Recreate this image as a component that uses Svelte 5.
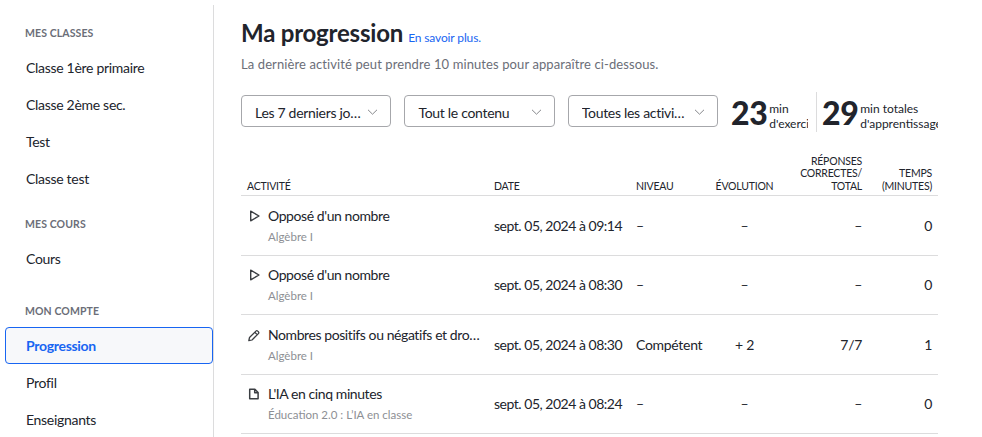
<script>
  const groups = [
    { title: 'MES CLASSES', items: ['Classe 1ère primaire', 'Classe 2ème sec.', 'Test', 'Classe test'] },
    { title: 'MES COURS', items: ['Cours'] },
    { title: 'MON COMPTE', items: ['Progression', 'Profil', 'Enseignants'] }
  ];
  const rows = [
    { icon: 'play', name: "Opposé d'un nombre", sub: 'Algèbre I', date: 'sept. 05, 2024 à 09:14', level: '–', evo: '–', score: '–', time: '0' },
    { icon: 'play', name: "Opposé d'un nombre", sub: 'Algèbre I', date: 'sept. 05, 2024 à 08:30', level: '–', evo: '–', score: '–', time: '0' },
    { icon: 'pencil', name: 'Nombres positifs ou négatifs et droite numérique', sub: 'Algèbre I', date: 'sept. 05, 2024 à 08:30', level: 'Compétent', evo: '+ 2', score: '7/7', time: '1' },
    { icon: 'doc', name: "L'IA en cinq minutes", sub: 'Éducation 2.0 : L’IA en classe', date: 'sept. 05, 2024 à 08:24', level: '–', evo: '–', score: '–', time: '0' }
  ];
  const selects = ['Les 7 derniers jours', 'Tout le contenu', 'Toutes les activités'];
</script>

<div class="page">
  <aside class="sidebar">
    {#each groups as g}
      <section class="group">
        <h2>{g.title}</h2>
        {#each g.items as item}
          <a class="nav" class:active={item === 'Progression'} href="#top">{item}</a>
        {/each}
      </section>
    {/each}
  </aside>

  <main class="main">
    <header class="head">
      <h1>Ma progression</h1>
      <a class="more" href="#top">En savoir plus.</a>
    </header>
    <p class="lead">La dernière activité peut prendre 10 minutes pour apparaître ci-dessous.</p>

    <div class="toolbar">
      {#each selects as s}
        <button class="select">
          <span class="label">{s}</span>
          <svg width="11" height="6" viewBox="0 0 11 6" fill="none"><path d="M1 .8l4.5 4.4L10 .8" stroke="#85878b" stroke-width="1"/></svg>
        </button>
      {/each}
      <div class="stat first">
        <strong>23</strong>
        <span class="cap">min<br />d'exercices</span>
      </div>
      <div class="stat second">
        <strong>29</strong>
        <span class="cap">min totales<br />d'apprentissage</span>
      </div>
    </div>

    <div class="table">
      <div class="row hdr">
        <div>ACTIVITÉ</div>
        <div>DATE</div>
        <div>NIVEAU</div>
        <div class="c">ÉVOLUTION</div>
        <div class="r">RÉPONSES CORRECTES/ TOTAL</div>
        <div class="r">TEMPS (MINUTES)</div>
      </div>
      {#each rows as r}
        <div class="row body">
          <div class="act">
            <span class="ico">
              {#if r.icon === 'play'}
                <svg width="13" height="12" viewBox="0 0 13 12" fill="none"><path d="M3.7 1.2v9.6L12 6z" stroke="#3b3e42" stroke-width="1.4" stroke-linejoin="round"/></svg>
              {:else if r.icon === 'pencil'}
                <svg width="13" height="13" viewBox="0 0 13 13" fill="none"><path d="M1.8 11.6l.7-3.1 6.4-6.4a1.3 1.3 0 0 1 1.8 0l.7.7a1.3 1.3 0 0 1 0 1.8l-6.4 6.4zM7.8 3.2l2.4 2.4" stroke="#3b3e42" stroke-width="1.25" stroke-linejoin="round"/></svg>
              {:else}
                <svg width="13" height="12" viewBox="0 0 13 12" fill="none"><path d="M2.7 1.3h5.2l3.2 3.2v6.2H2.7zM7.7 1.3v3.5h3.4" stroke="#3b3e42" stroke-width="1.5" stroke-linejoin="round"/></svg>
              {/if}
            </span>
            <div class="names">
              <div class="name">{r.name}</div>
              <div class="sub">{r.sub}</div>
            </div>
          </div>
          <div class="date">{r.date}</div>
          <div>{r.level}</div>
          <div class="c">{r.evo}</div>
          <div class="r">{r.score}</div>
          <div class="r">{r.time}</div>
        </div>
      {/each}
    </div>
  </main>
</div>

<style>
  :global(body) {
    margin: 0;
    background: #fff;
    overflow: hidden;
  }
  .page {
    display: flex;
    height: 437px;
    overflow: hidden;
    font-family: Lato, "Liberation Sans", sans-serif;
    color: #21242c;
    font-size: 14px;
    letter-spacing: -0.3px;
  }
  .sidebar {
    box-sizing: border-box;
    width: 214px;
    flex: none;
    margin-top: 5px;
    padding: 21px 0 0 5px;
    border-right: 1px solid #dcdcdd;
  }
  .group {
    margin-bottom: 20px;
  }
  .group:nth-child(2) {
    margin-bottom: 27px;
  }
  h2 {
    margin: 0 0 9px;
    padding-left: 20px;
    font-size: 10.5px;
    line-height: 14px;
    font-weight: 700;
    letter-spacing: 0.1px;
    color: #6b6e78;
  }
  .nav {
    display: block;
    box-sizing: border-box;
    height: 37px;
    line-height: 37px;
    padding-left: 21px;
    color: #21242c;
    text-decoration: none;
    border-radius: 4px;
  }
  .nav.active {
    color: #1865f2;
    font-weight: 700;
    background: #f7f8fa;
    outline: 1px solid #1865f2;
    outline-offset: -1px;
  }
  .main {
    box-sizing: border-box;
    width: 697px;
    margin-left: 27px;
    flex: none;
    overflow: hidden;
  }
  .head {
    display: flex;
    align-items: baseline;
    gap: 5px;
    margin-top: 18px;
    height: 30px;
  }
  h1 {
    margin: 0;
    font-size: 24px;
    line-height: 30px;
    font-weight: 700;
    letter-spacing: -0.2px;
  }
  .more {
    color: #1865f2;
    font-size: 12px;
    letter-spacing: -0.13px;
    text-decoration: none;
  }
  .lead {
    margin: 8px 0 0;
    font-size: 13px;
    line-height: 16px;
    letter-spacing: 0.1px;
    color: #6b6e78;
  }
  .toolbar {
    display: flex;
    align-items: center;
    margin-top: 20px;
    height: 40px;
    white-space: nowrap;
  }
  .select {
    box-sizing: border-box;
    display: flex;
    flex: none;
    align-items: center;
    justify-content: space-between;
    width: 150.3px;
    height: 32px;
    margin: 0 13.1px 2px 0;
    padding: 2px 12px 0 13px;
    background: #fff;
    border: 1px solid #a6a7ab;
    border-radius: 4px;
    font: inherit;
    letter-spacing: inherit;
    color: inherit;
  }
  .select:last-of-type {
    margin-right: 0;
  }
  .label {
    width: 106px;
    text-align: left;
    overflow: hidden;
    text-overflow: ellipsis;
    white-space: nowrap;
  }
  .stat {
    display: flex;
    align-items: center;
    gap: 2px;
    height: 40px;
    overflow: hidden;
    flex: none;
  }
  .stat.first {
    width: 99px;
    padding-left: 13px;
    box-sizing: border-box;
    border-right: 1px solid #dcdcdd;
  }
  .stat.first .cap {
    width: 39px;
    overflow: hidden;
    flex: none;
  }
  .stat.second {
    padding-left: 5px;
    width: 124px;
  }
  strong {
    font-size: 32px;
    line-height: 40px;
    font-weight: 900;
    letter-spacing: -0.5px;
    margin-top: 2px;
  }
  .cap {
    font-size: 12px;
    line-height: 15px;
    letter-spacing: 0;
    white-space: nowrap;
    margin-top: 8px;
  }
  .table {
    margin-top: 21px;
    width: 697px;
  }
  .row {
    display: grid;
    grid-template-columns: 247px 142px 80px 69px 89px 70px;
    border-bottom: 1px solid #dcdcdd;
  }
  .row > div {
    padding: 0 6px;
    min-width: 0;
  }
  .hdr {
    align-items: end;
    height: 39px;
    font-size: 10.5px;
    line-height: 12.5px;
    letter-spacing: -0.22px;
    padding-bottom: 3px;
  }
  .body {
    align-items: center;
    height: 59.5px;
    box-sizing: border-box;
  }
  .c { text-align: center; }
  .r { text-align: right; }
  .row > .c { padding: 0; }
  .date {
    white-space: nowrap;
    letter-spacing: -0.48px;
  }
  .act {
    display: flex;
    align-items: flex-start;
    gap: 8px;
    margin-top: 1px;
  }
  .ico {
    flex: none;
    width: 13px;
    height: 12px;
    margin-top: 3px;
    display: flex;
  }
  .names {
    min-width: 0;
    flex: 1;
  }
  .name {
    overflow: hidden;
    text-overflow: ellipsis;
    white-space: nowrap;
    line-height: 18px;
    margin-bottom: 4px;
    letter-spacing: -0.42px;
  }
  .sub {
    font-size: 11.5px;
    line-height: 16px;
    letter-spacing: 0;
    color: #8d8f94;
    white-space: nowrap;
  }
</style>
